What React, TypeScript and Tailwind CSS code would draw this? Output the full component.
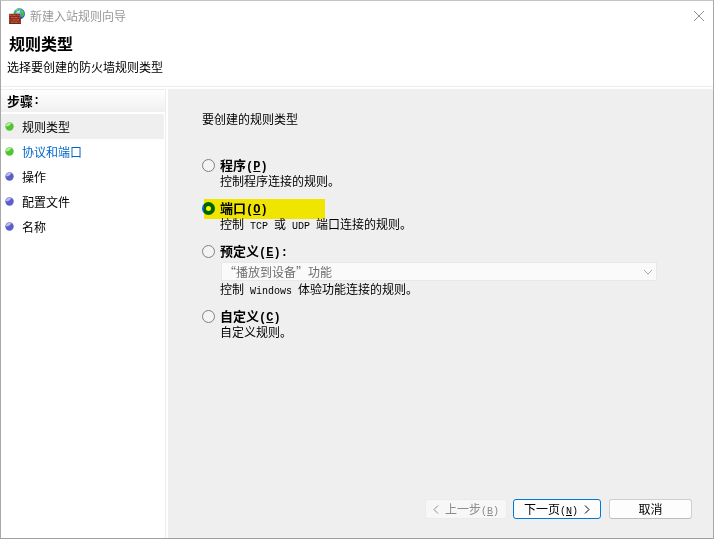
import React, { useState } from "react";

// ============================================================
// App.tsx — New inbound rule wizard, "rule type" page
// ============================================================

type StepState = "done" | "link" | "pending";

interface Step {
  label: string;
  state: StepState;
}

const STEPS: Step[] = [
  { label: "规则类型", state: "done" },
  { label: "协议和端口", state: "link" },
  { label: "操作", state: "pending" },
  { label: "配置文件", state: "pending" },
  { label: "名称", state: "pending" },
];

/** Half-width run inside Chinese text */
function Latin({ children }: { children: React.ReactNode }) {
  return (
    <span className="whitespace-pre font-['Liberation_Mono',monospace] text-[10px] leading-none">
      {children}
    </span>
  );
}

/** Access key in brackets, e.g. (N) */
function Key({ char, bold = false }: { char: string; bold?: boolean }) {
  return (
    <span
      className={`font-['Liberation_Mono',monospace] leading-none ${bold ? "text-[12px]" : "text-[10px]"}`}
    >
      (<u>{char}</u>)
    </span>
  );
}

function FirewallIcon() {
  return (
    <svg className="h-4 w-4" viewBox="0 0 16 16" aria-hidden="true">
      <defs>
        <radialGradient id="globe" cx="0.4" cy="0.3" r="0.75">
          <stop offset="0" stopColor="#d4f6ff" />
          <stop offset="0.45" stopColor="#3d9be8" />
          <stop offset="1" stopColor="#1036a0" />
        </radialGradient>
      </defs>
      <circle cx="10.2" cy="5.8" r="5.7" fill="url(#globe)" />
      <path d="M5.4 3.4 8.4.8l2.2.3-.8 1.6-2 .6-.8 2-1.8 1zM11.4 2l2.4.4 1.6 2.4-.4 2.8-2 2.2-1-2.6.8-1.6-1.8-1.4z" fill="#48b83c" />
      <path d="M6.8 2.4 8.8 1.2M12.4 3l1.4 1.2" stroke="#b6ef8c" strokeWidth="0.8" />
      <path d="M0 6h11v4l1 1v4.6H0z" fill="#b2432a" />
      <path
        d="M0 6.2h11M0 8.5h11M0 10.8h12M0 13.1h12M3 6v2.5M7 6v2.5M1.4 8.5v2.3M5 8.5v2.3M9 8.5v2.3M3 10.8v2.3M7 10.8v2.3M10.6 10.8v2.3M1.4 13.1v2.2M5 13.1v2.2M9 13.1v2.2"
        stroke="#6e2014"
        strokeWidth="0.6"
      />
      <path d="M.4 7.2h2M3.6 7.2h3M2 9.5h2.6M5.5 9.5h3M3.6 11.8h3M7.5 11.8h2.6M2 14h2.6M5.6 14h3" stroke="#d4704f" strokeWidth="0.6" />
      <path d="M0 15.5h12" stroke="#43120c" strokeWidth="0.8" />
    </svg>
  );
}

function Bullet({ green }: { green: boolean }) {
  return (
    <svg className="h-[9px] w-[9px]" viewBox="0 0 9 9" aria-hidden="true">
      <circle cx="4.5" cy="4.5" r="4.2" fill={green ? "#4fc52e" : "#5d5fc8"} />
      <path
        d="M.6 4.6A4 4 0 0 1 6.4 1C5.4 3.4 3.2 4.6.6 4.6z"
        fill={green ? "#b5e8a8" : "#b9bbea"}
      />
    </svg>
  );
}

interface OptionProps {
  id: string;
  title: string;
  accessKey: string;
  colon?: boolean;
  marked?: boolean;
  checked: boolean;
  onSelect: (id: string) => void;
  children: React.ReactNode;
}

function Option({ id, title, accessKey, colon, marked, checked, onSelect, children }: OptionProps) {
  return (
    <div>
      <div className="relative flex h-4 items-center gap-[5px]">
        <input
          type="radio"
          id={id}
          name="rule-type"
          checked={checked}
          onChange={() => onSelect(id)}
          className="h-[13px] w-[13px] shrink-0 appearance-none rounded-full border border-[#808080] bg-[#f4f4f4] checked:border-4 checked:border-[#0067c0] checked:bg-white"
        />
        <label htmlFor={id} className="text-[13px] leading-4 font-bold">
          {title}
          <Key char={accessKey} bold />
          {colon && (
            <span className="font-['Liberation_Mono',monospace] text-[12px] leading-none">:</span>
          )}
        </label>
        {/* Highlighter stroke over the option */}
        {marked && (
          <div className="pointer-events-none absolute -top-px left-0.5 h-5 w-[121px] bg-[#fff500] mix-blend-multiply" />
        )}
      </div>
      <div className="pl-[18px]">{children}</div>
    </div>
  );
}

export default function App() {
  const [rule, setRule] = useState("port");

  return (
    <div className="flex min-h-screen flex-col border border-t-[#c4c4c4] border-r-[#a8a8a8] border-b-[#a0a0a0] border-l-[#a8a8a8] bg-white font-['Noto_Sans_CJK_SC',sans-serif] text-[12px] leading-4 text-black">
      {/* ---- Title bar ---- */}
      <div className="flex h-[29px] items-center pr-1.5 pl-2">
        <FirewallIcon />
        <span className="ml-[5px] grow text-[#999999]">新建入站规则向导</span>
        <button type="button" aria-label="关闭" className="p-0.5">
          <svg className="h-3 w-3" viewBox="0 0 12 12" aria-hidden="true">
            <path d="M1 1l10 10M11 1 1 11" stroke="#909090" />
          </svg>
        </button>
      </div>

      {/* ---- Page heading ---- */}
      <header className="border-b border-[#ededed] pt-[3px] pb-[11px]">
        <h1 className="pl-2 text-[16px] leading-5 font-bold">规则类型</h1>
        <p className="mt-1.5 pl-1.5">选择要创建的防火墙规则类型</p>
      </header>

      <div className="mt-0.5 flex grow">
        {/* ---- Steps ---- */}
        <nav className="mr-0.5 w-[165px] shrink-0 border-r border-[#ededed]">
          <h2 className="mb-0.5 flex h-[23px] items-center border-t border-[#ededed] bg-linear-to-b from-white to-[#f0f0f0] pl-1.5 text-[13px] font-bold">
            步骤
            <span className="font-['Liberation_Mono',monospace] text-[12px]">:</span>
          </h2>
          <ol className="mr-px">
            {STEPS.map((step) => (
              <li
                key={step.label}
                className={`flex h-[25px] items-center gap-2 pl-1 ${step.state === "done" ? "bg-[#efefef]" : ""}`}
              >
                <Bullet green={step.state !== "pending"} />
                {step.state === "link" ? (
                  <a href="#" className="text-[#0066cc]">
                    {step.label}
                  </a>
                ) : (
                  <span>{step.label}</span>
                )}
              </li>
            ))}
          </ol>
        </nav>

        {/* ---- Options ---- */}
        <main className="flex grow flex-col bg-[#efefef] pt-[22px] pl-[34px]">
          <p id="rule-type-title">要创建的规则类型</p>
          <div
            role="radiogroup"
            aria-labelledby="rule-type-title"
            className="mt-[30px] flex flex-col gap-[11px] pr-14"
          >
            <Option id="program" title="程序" accessKey="P" checked={rule === "program"} onSelect={setRule}>
              <p>控制程序连接的规则。</p>
            </Option>
            <Option id="port" title="端口" accessKey="O" marked checked={rule === "port"} onSelect={setRule}>
              <p>
                控制<Latin> TCP </Latin>或<Latin> UDP </Latin>端口连接的规则。
              </p>
            </Option>
            <Option id="predefined" title="预定义" accessKey="E" colon checked={rule === "predefined"} onSelect={setRule}>
              <div className="relative mt-[3px] ml-px">
                <select
                  disabled={rule !== "predefined"}
                  aria-label="预定义"
                  className="block h-[19px] w-full appearance-none border border-[#e8e8e8] bg-[#fafafa] pl-0.5 text-[#6d6d6d] opacity-100"
                >
                  <option>“播放到设备”功能</option>
                </select>
                <svg className="pointer-events-none absolute top-1.5 right-1 h-2 w-2.5" viewBox="0 0 10 8" aria-hidden="true">
                  <path d="M1 2l4 4 4-4" fill="none" stroke="#a8a8a8" />
                </svg>
              </div>
              <p>
                控制<Latin> Windows </Latin>体验功能连接的规则。
              </p>
            </Option>
            <Option id="custom" title="自定义" accessKey="C" checked={rule === "custom"} onSelect={setRule}>
              <p>自定义规则。</p>
            </Option>
          </div>

          {/* ---- Wizard buttons ---- */}
          <div className="mt-auto flex justify-end pt-8 pr-[21px] pb-[19px]">
            <button
              type="button"
              disabled
              className="mr-1.5 flex h-5 w-[82px] items-center justify-center gap-1.5 rounded-[3px] border border-[#ebebeb] bg-[#f7f7f7] text-[#8a8a8a]"
            >
              <svg className="h-[9px] w-1.5" viewBox="0 0 6 9" aria-hidden="true">
                <path d="M5 .5l-4 4 4 4" fill="none" stroke="#8a8a8a" />
              </svg>
              <span>
                上一步
                <Key char="B" />
              </span>
            </button>
            <button
              type="button"
              className="mr-2 flex h-5 w-[88px] items-center justify-center gap-1.5 rounded-[3px] border border-[#0078d4] bg-[#fdfdfd]"
            >
              <span>
                下一页
                <Key char="N" />
              </span>
              <svg className="h-[9px] w-1.5" viewBox="0 0 6 9" aria-hidden="true">
                <path d="M1 .5l4 4-4 4" fill="none" stroke="#000000" />
              </svg>
            </button>
            <button
              type="button"
              className="flex h-5 w-[83px] items-center justify-center rounded-[3px] border border-[#cfcfcf] border-b-[#bdbdbd] bg-[#fdfdfd]"
            >
              取消
            </button>
          </div>
        </main>
      </div>
    </div>
  );
}
